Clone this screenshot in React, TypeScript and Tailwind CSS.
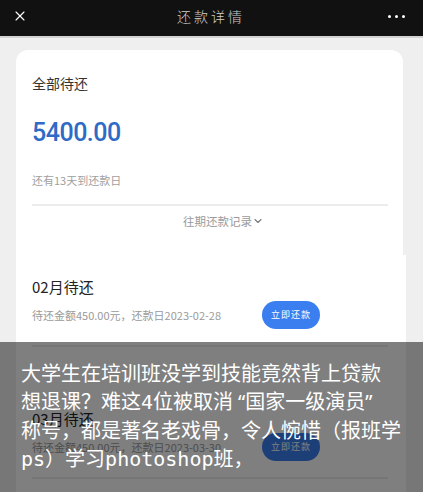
import { X, ChevronDown } from "lucide-react";

const cjk = { fontFamily: '"Noto Sans CJK SC", "Noto Sans", sans-serif' };
const mono = { fontFamily: '"DejaVu Sans Mono", "Noto Sans CJK SC", monospace' };
const latin = { fontFamily: '"Noto Sans", sans-serif' };

function Bill({ month, date, top }: { month: string; date: string; top: string }) {
  return (
    <div className={top}>
      <div className="text-[15px] leading-[22px] text-[#222]">{month}月待还</div>
      <div className="mt-[3px] flex items-center">
        <div className="w-[230px] text-[11px] leading-[16px] text-[#9a9a9a]">
          待还金额450.00元，还款日{date}
        </div>
        <button className="flex h-[28px] w-[58px] items-center justify-center rounded-full bg-[#3a7ef0] text-[9px] tracking-[1px] text-white">
          立即还款
        </button>
      </div>
      <div className="mt-[16px] h-[2px] w-[356px] bg-[#ececec]" />
    </div>
  );
}

export default function App() {
  return (
    <div className="relative h-[492px] w-[423px] overflow-hidden bg-[#efefef]" style={cjk}>
      {/* Header */}
      <div className="flex h-[38px] items-center justify-between border-b-2 border-[#d2d2d2] bg-[#111111] pb-[4px] pl-[12px] pr-[18px]">
        <X className="h-[16px] w-[16px] text-white" strokeWidth={1.6} />
        <div className="ml-[6px] text-[14px] font-light tracking-[3px] text-[#cfcfcf]">还款详情</div>
        <div className="flex gap-[4px]">
          <span className="h-[3px] w-[3px] rounded-full bg-white" />
          <span className="h-[3px] w-[3px] rounded-full bg-white" />
          <span className="h-[3px] w-[3px] rounded-full bg-white" />
        </div>
      </div>

      {/* Summary card */}
      <div className="ml-[16px] mt-[12px] h-[205px] w-[387px] rounded-t-[12px] bg-white px-[16px] pt-[23px]">
        <div className="text-[14px] leading-[20px] text-[#333]">全部待还</div>
        <div
          className="mt-[25px] text-[25px] font-medium leading-[30px] tracking-[-0.5px] text-[#2e6bc6]"
          style={{ fontFamily: "Roboto, sans-serif" }}
        >
          5400.00
        </div>
        <div className="mt-[24px] text-[11px] leading-[16px] text-[#a0a0a0]">还有13天到还款日</div>
        <div className="mt-[16px] h-[2px] w-[356px] bg-[#ececec]" />
        <div className="mt-[7px] flex items-center justify-center pl-[28px] text-[11.5px] leading-[16px] text-[#9a9a9a]">
          往期还款记录
          <ChevronDown className="h-[12px] w-[12px] text-[#777]" strokeWidth={2.2} />
        </div>
      </div>

      {/* Bills */}
      <div className="ml-[16px] h-[260px] w-[390px] bg-white px-[16px]">
        <Bill month="02" date="2023-02-28" top="pt-[21px]" />
        <Bill month="03" date="2023-03-30" top="pt-[61px]" />
      </div>

      {/* Caption overlay */}
      <div className="absolute bottom-0 left-0 right-0 top-[342px] bg-black/50 px-[21px] pt-[17px] text-[20px] leading-[28px] text-white">
        <div className="whitespace-nowrap">大学生在培训班没学到技能竟然背上贷款</div>
        <div className="whitespace-nowrap">
          想退课？难这<span style={mono}>4</span>位被取消
          <span className="ml-[5px]" style={latin}>
            “
          </span>
          国家一级演员
          <span style={latin}>”</span>
        </div>
        <div className="whitespace-nowrap">称号，都是著名老戏骨，令人惋惜（报班学</div>
        <div className="whitespace-nowrap">
          <span style={mono}>ps</span>）学习<span style={mono}>photoshop</span>班，
        </div>
      </div>
    </div>
  );
}
